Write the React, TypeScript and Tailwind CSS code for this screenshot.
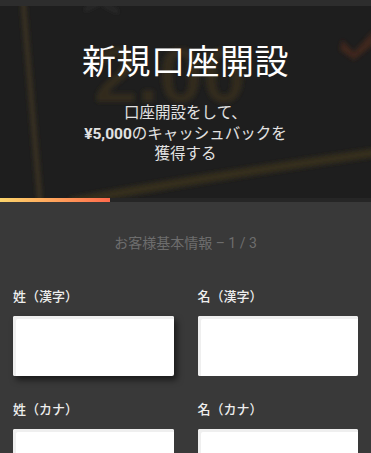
const jp = { fontFamily: 'Roboto, "Noto Sans CJK JP", sans-serif' };

function HeroBackdrop() {
  // faint blurred chart image behind the hero copy
  return (
    <svg className="absolute inset-0 h-full w-full pointer-events-none" viewBox="0 0 371 192" preserveAspectRatio="none">
      <defs>
        <filter id="soft" x="-20%" y="-20%" width="140%" height="140%">
          <feGaussianBlur stdDeviation="2.2" />
        </filter>
      </defs>
      <g filter="url(#soft)">
        <path d="M23 -6 L40 196" stroke="#3a3220" strokeWidth="5" />
        <path d="M70 196 Q 200 172 380 146" stroke="#352e1e" strokeWidth="9" fill="none" />
        <text x="94" y="96" fontSize="78" fontWeight="700" fill="#322c1f" fontFamily="Liberation Sans, sans-serif">2.00</text>
        <path d="M85 4 L100 -4 M103 -2 L118 6" stroke="#363636" strokeWidth="2" />
        <path d="M342 34 L354 46 L374 24 L374 38 L354 54 L340 44 Z" fill="#3f261b" />
      </g>
    </svg>
  );
}

function Field({ label, raised }: { label: string; raised?: boolean }) {
  return (
    <div className="flex flex-col">
      <label className="text-[13px] leading-5 font-medium text-[#eeeeee]">{label}</label>
      <div
        className={`mt-[9px] h-[60px] rounded-[2px] bg-white ${
          raised
            ? "shadow-[inset_3px_3px_0_0_#efefef,3px_4px_6px_rgba(0,0,0,0.55)]"
            : "shadow-[inset_3px_3px_0_0_#efefef]"
        }`}
      />
    </div>
  );
}

export default function App() {
  return (
    <div className="w-[371px] h-[453px] overflow-hidden bg-[#393939]" style={jp}>
      <div className="h-[6px] bg-[#2d2d2d]" />

      {/* HERO */}
      <section className="relative h-[192px] bg-[#1e1e1e] flex flex-col items-center overflow-hidden">
        <HeroBackdrop />
        <h1 className="relative mt-[36px] text-[34px] leading-[41px] text-white font-normal tracking-[0.5px]">
          新規口座開設
        </h1>
        <p className="relative mt-[20px] text-center text-[15.5px] leading-[20.5px] text-[#e2e2e2]">
          口座開設をして、
          <br />
          <span className="font-bold">¥5,000</span>のキャッシュバックを
          <br />
          獲得する
        </p>
      </section>

      {/* PROGRESS */}
      <div className="h-[4px] bg-[#262626]">
        <div className="h-full w-[110px] bg-gradient-to-r from-[#fad46c] to-[#ff6a4c]" />
      </div>

      {/* FORM */}
      <section className="px-[13px] pt-[31px]">
        <h2 className="text-center text-[14px] leading-5 text-[#6d6d6d]">お客様基本情報 – 1 / 3</h2>
        <div className="mt-[34px] grid grid-cols-2 gap-x-6 gap-y-6">
          <Field label="姓（漢字）" raised />
          <Field label="名（漢字）" />
          <Field label="姓（カナ）" />
          <Field label="名（カナ）" />
        </div>
      </section>
    </div>
  );
}
